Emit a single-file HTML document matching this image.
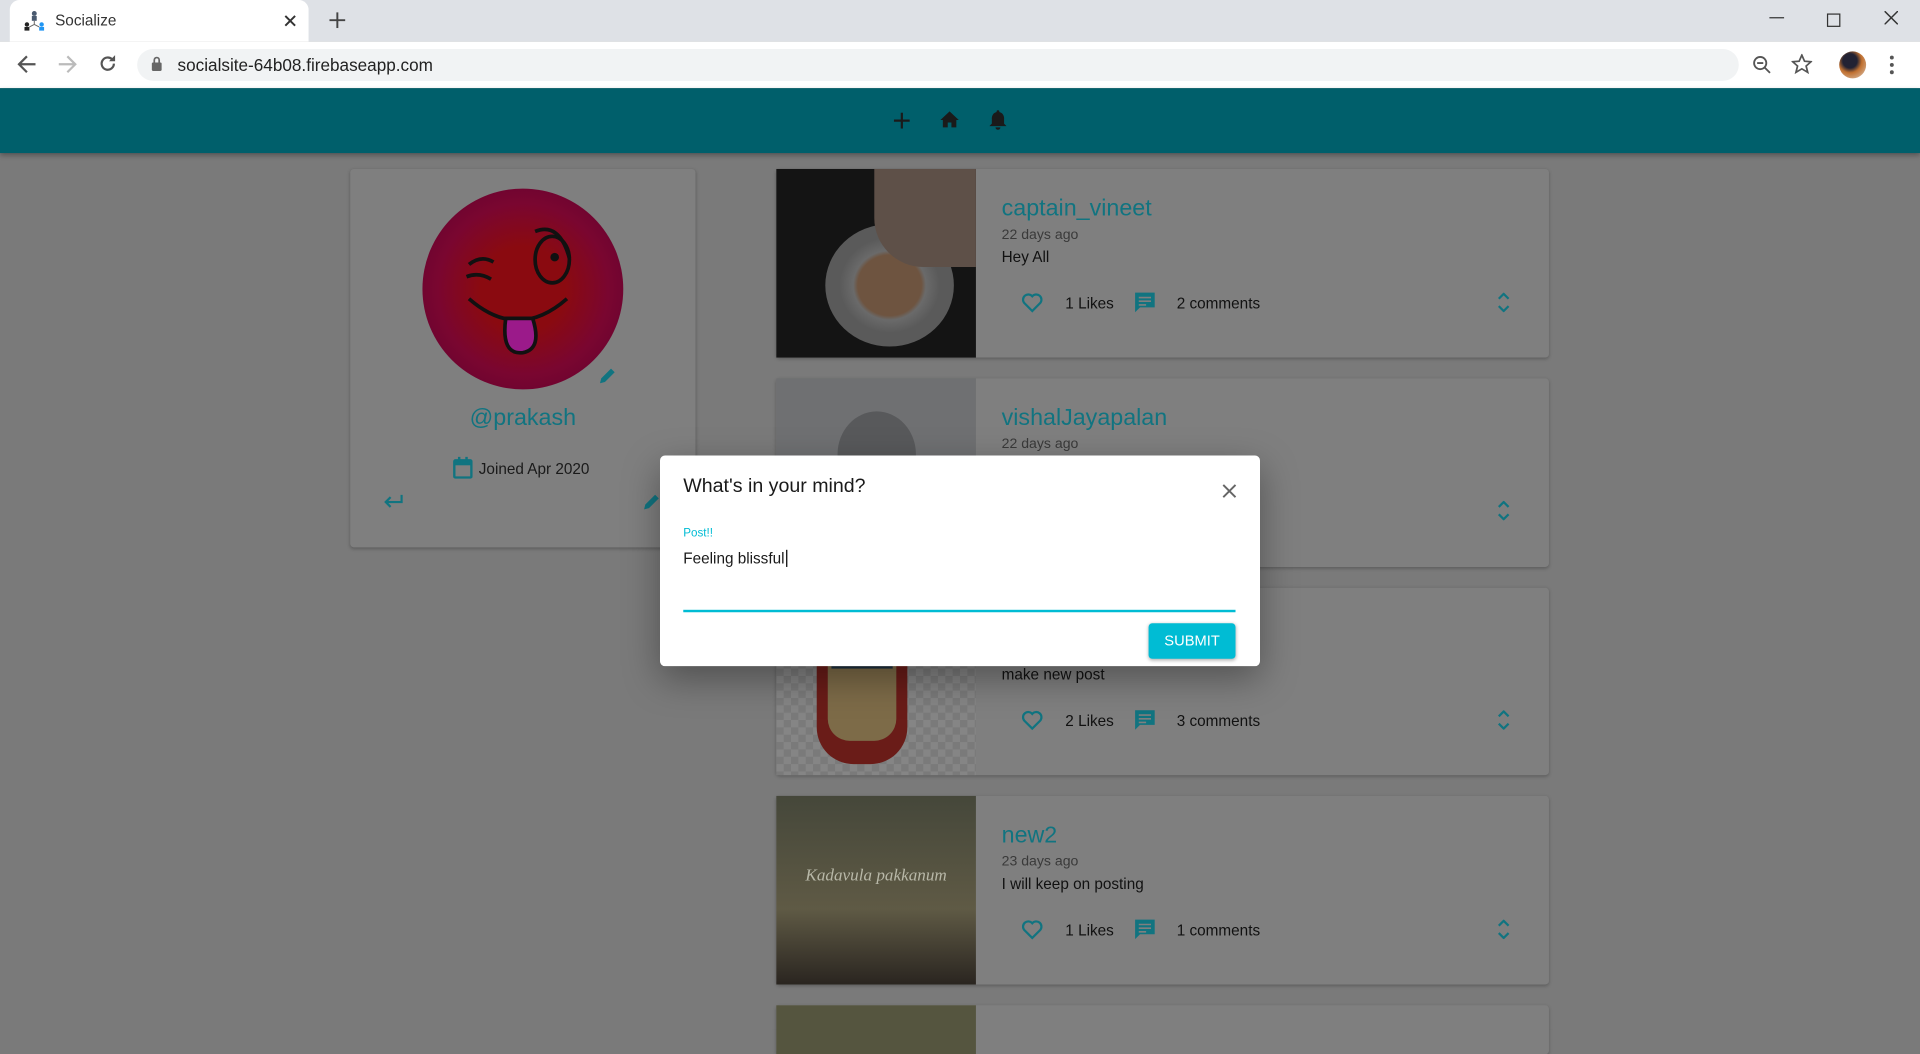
<!DOCTYPE html>
<html><head><meta charset="utf-8"><style>
html,body{margin:0;padding:0;width:1920px;height:1030px;overflow:hidden;background:#7a7a7a}
#w{position:absolute;left:0;top:0;width:1568px;height:841px;transform:scale(1.22449);transform-origin:0 0;font-family:"Liberation Sans",sans-serif;background:#7a7a7a}
.a{position:absolute}
.card{position:absolute;background:#7f7f7f;border-radius:3px;box-shadow:0 1px 3px rgba(0,0,0,.25)}
.teal{color:#117480}
.name{position:absolute;left:184px;font-size:19px;color:#117480}
.date{position:absolute;left:184px;font-size:11.5px;color:#3a3a3a}
.txt{position:absolute;left:184px;font-size:12.5px;color:#111}
.lbl{position:absolute;font-size:12.5px;color:#111}
</style></head><body><div id="w">
<div class="a" style="left:0;top:0;width:1568px;height:34px;background:#dee1e6"></div>
<div class="a" style="left:8px;top:0;width:244px;height:34px;background:#fff;border-radius:8px 8px 0 0"></div>
<svg class="a" style="left:19px;top:8px" width="18" height="18" viewBox="0 0 18 18"><circle cx="9" cy="3" r="2" fill="#4a5a70"/><rect x="7" y="5" width="4" height="4" fill="#4a5a70"/><circle cx="3" cy="12" r="1.8" fill="#222"/><rect x="1" y="14" width="4" height="3" fill="#222"/><circle cx="15" cy="12" r="1.8" fill="#2196f3"/><rect x="13" y="14" width="4" height="3" fill="#2196f3"/><path d="M9 9v3M9 12l-4 2M9 12l4 2" stroke="#666" stroke-width=".8" fill="none"/></svg>
<div class="a" style="left:45px;top:10px;font-size:12.5px;color:#333">Socialize</div>
<svg class="a" style="left:232px;top:12px" width="10" height="10"><path d="M1 1l8 8M9 1L1 9" stroke="#333" stroke-width="1.6"/></svg>
<svg class="a" style="left:269px;top:10px" width="13" height="13"><path d="M6.5 0v13M0 6.5h13" stroke="#444" stroke-width="1.6"/></svg>
<div class="a" style="left:1445px;top:14px;width:12px;height:1px;background:#333"></div>
<div class="a" style="left:1492px;top:11px;width:9px;height:9px;border:1px solid #333"></div>
<svg class="a" style="left:1539px;top:9px" width="11" height="11"><path d="M0 0l11 11M11 0L0 11" stroke="#333" stroke-width="1.2"/></svg>
<div class="a" style="left:0;top:34px;width:1568px;height:38px;background:#fff"></div>
<svg class="a" style="left:14px;top:45px" width="16" height="15"><path d="M15 7.5H2M8 1L1.5 7.5 8 14" stroke="#555" stroke-width="1.8" fill="none"/></svg>
<svg class="a" style="left:47px;top:45px" width="16" height="15"><path d="M1 7.5h13M8 1l6.5 6.5L8 14" stroke="#bbb" stroke-width="1.8" fill="none"/></svg>
<svg class="a" style="left:80px;top:44px" width="16" height="16"><path d="M13 8a5 5 0 1 1-1.5-3.6" stroke="#555" stroke-width="1.8" fill="none"/><path d="M14 1v5H9z" fill="#555"/></svg>
<div class="a" style="left:112px;top:40px;width:1308px;height:26px;background:#f1f3f4;border-radius:13px"></div>
<svg class="a" style="left:123px;top:46px" width="10" height="13"><rect x="1" y="5" width="8" height="7" rx="1" fill="#666"/><path d="M3 5V3a2 2 0 0 1 4 0v2" stroke="#666" stroke-width="1.4" fill="none"/></svg>
<div class="a" style="left:145px;top:45px;font-size:14px;color:#222">socialsite-64b08.firebaseapp.com</div>
<svg class="a" style="left:1431px;top:45px" width="16" height="16"><circle cx="6.5" cy="6.5" r="5" stroke="#555" stroke-width="1.5" fill="none"/><path d="M10 10l4.5 4.5M4 6.5h5" stroke="#555" stroke-width="1.5"/></svg>
<svg class="a" style="left:1463px;top:44px" width="17" height="17"><path d="M8.5 1l2.2 5 5.3.4-4 3.5 1.3 5.2-4.8-2.9-4.8 2.9 1.3-5.2-4-3.5 5.3-.4z" stroke="#555" stroke-width="1.4" fill="none"/></svg>
<div class="a" style="left:1502px;top:42px;width:22px;height:22px;border-radius:50%;background:radial-gradient(circle at 40% 35%,#223 0 30%,#c07030 50%,#dcb)"></div>
<svg class="a" style="left:1543px;top:45px" width="4" height="16"><circle cx="2" cy="2" r="1.6" fill="#555"/><circle cx="2" cy="8" r="1.6" fill="#555"/><circle cx="2" cy="14" r="1.6" fill="#555"/></svg>
<div class="a" style="left:0;top:72px;width:1568px;height:53px;background:#005f6b;box-shadow:0 2px 4px rgba(0,0,0,.3)"></div>
<svg class="a" style="left:730px;top:92px" width="13" height="13"><path d="M6.5 0v13M0 6.5h13" stroke="#1a1a1a" stroke-width="1.8"/></svg>
<svg class="a" style="left:767px;top:90px" width="17" height="15"><path d="M1 8L8.5 1 16 8h-2v6h-4v-4H7v4H3V8z" fill="#1a1a1a"/></svg>
<svg class="a" style="left:807px;top:89px" width="16" height="18"><path d="M8 1a1 1 0 0 1 1 1.5A5 5 0 0 1 13 8v4l2 2H1l2-2V8a5 5 0 0 1 4-5.5A1 1 0 0 1 8 1zM6 15h4a2 2 0 0 1-4 0z" fill="#1a1a1a"/></svg>
<div class="card" style="left:286px;top:138px;width:282px;height:309px">
<div class="a" style="left:59px;top:16px;width:164px;height:164px;border-radius:50%;background:radial-gradient(circle,#8a0a10 30%,#7a0630 60%,#5a0030)"></div>
<svg class="a" style="left:59px;top:16px" width="164" height="164" viewBox="0 0 164 164"><path d="M38 62q10-8 20-2M36 72q10-4 20 2" stroke="#111" stroke-width="3" fill="none"/><ellipse cx="106" cy="58" rx="14" ry="19" stroke="#111" stroke-width="3" fill="none"/><circle cx="108" cy="56" r="3.5" fill="#111"/><path d="M92 35q20-8 28 22" stroke="#111" stroke-width="3" fill="none"/><path d="M38 90q40 35 80 0" stroke="#111" stroke-width="3" fill="none"/><path d="M68 106q-4 30 14 28 16-3 8-28z" fill="#9b1a8a" stroke="#111" stroke-width="3"/></svg>
<svg class="a" style="left:202px;top:161px" width="16" height="16"><path d="M2 14l1-4 8-8 3 3-8 8z" fill="#117480"/></svg>
<div class="a teal" style="left:0;width:282px;top:193px;text-align:center;font-size:19px">@prakash</div>
<svg class="a" style="left:84px;top:235px" width="16" height="18"><rect x="1" y="3" width="14" height="14" rx="1" stroke="#117480" stroke-width="2" fill="none"/><rect x="1" y="3" width="14" height="4" fill="#117480"/><rect x="4" y="0" width="2" height="4" fill="#117480"/><rect x="10" y="0" width="2" height="4" fill="#117480"/></svg>
<div class="a" style="left:105px;top:238px;font-size:12.5px;color:#1a1a1a">Joined Apr 2020</div>
<svg class="a" style="left:27px;top:266px" width="16" height="12"><path d="M15 0v6H2M6 2L2 6l4 4" stroke="#117480" stroke-width="1.8" fill="none"/></svg>
<svg class="a" style="left:238px;top:264px" width="16" height="16"><path d="M2 14l1-4 8-8 3 3-8 8z" fill="#117480"/></svg>
</div>
<div class="card" style="left:634px;top:138px;width:631px;height:154px">
<div class="a" style="left:0;top:0;width:163px;height:154px;background:#141414;overflow:hidden"><div class="a" style="left:40px;top:45px;width:105px;height:100px;border-radius:50%;background:radial-gradient(ellipse,#6e5440 0 35%,#6a6a6a 40%,#5a5a5a 55%)"></div><div class="a" style="left:80px;top:0;width:90px;height:80px;background:#5e5048;border-radius:0 0 0 40px"></div></div>
<div class="name" style="top:22px">captain_vineet</div><div class="date" style="top:48px">22 days ago</div><div class="txt" style="top:65px">Hey All</div>
</div>
<div class="card" style="left:634px;top:309px;width:631px;height:154px">
<div class="a" style="left:0;top:0;width:163px;height:154px;background:#6f7072"></div>
<div class="a" style="left:50px;top:27px;width:64px;height:70px;border-radius:50%;background:#58595b"></div>
<div class="name" style="top:22px">vishalJayapalan</div><div class="date" style="top:48px">22 days ago</div>
</div>
<div class="card" style="left:634px;top:480px;width:631px;height:153px">
<div class="a" style="left:0;top:0;width:163px;height:153px;background:repeating-conic-gradient(#7a7a7a 0 25%,#858585 0 50%) 0 0/12px 12px"></div>
<div class="a" style="left:33px;top:50px;width:74px;height:94px;background:#6a1c18;border-radius:6px 6px 30px 30px"></div>
<div class="a" style="left:42px;top:55px;width:56px;height:70px;background:#7d6b48;border-radius:3px 3px 18px 18px"></div>
<div class="a" style="left:45px;top:64px;width:50px;height:6px;border-top:2px solid #1e3040"></div>
<div class="txt" style="top:64px">make new post</div>
</div>
<div class="card" style="left:634px;top:650px;width:631px;height:154px">
<div class="a" style="left:0;top:0;width:163px;height:154px;background:linear-gradient(#45473a,#5f5a45 60%,#2a2520)"></div>
<div class="a" style="left:0;width:163px;top:58px;text-align:center;font-size:14px;font-style:italic;color:#b8b8a8;font-family:'Liberation Serif',serif">Kadavula pakkanum</div>
<div class="name" style="top:22px">new2</div><div class="date" style="top:48px">23 days ago</div><div class="txt" style="top:65px">I will keep on posting</div>
</div>
<div class="card" style="left:634px;top:821px;width:631px;height:40px"><div class="a" style="left:0;top:0;width:163px;height:40px;background:#55553f"></div></div>
<svg width="0" height="0" style="position:absolute"><defs>
<g id="heart"><path d="M9 16L2.5 9.5A4 4 0 0 1 9 4a4 4 0 0 1 6.5 5.5z" stroke="#117480" stroke-width="1.8" fill="none"/></g>
<g id="cmt"><path d="M1 1h16v12H5l-4 4z" fill="#117480"/><path d="M4 5h10M4 8h10M4 11h6" stroke="#7f7f7f" stroke-width="1.3"/></g>
<g id="chev"><path d="M1 5l4-4 4 4M1 11l4 4 4-4" stroke="#117480" stroke-width="1.8" fill="none"/></g>
</defs></svg>
<div class="a" style="left:834px;top:238px"><svg width="18" height="18"><use href="#heart"/></svg></div><div class="lbl" style="left:870px;top:241px">1 Likes</div><div class="a" style="left:926px;top:238px"><svg width="18" height="18"><use href="#cmt"/></svg></div><div class="lbl" style="left:961px;top:241px">2 comments</div><div class="a" style="left:1223px;top:239px"><svg width="10" height="16"><use href="#chev"/></svg></div>
<div class="a" style="left:1223px;top:409px"><svg width="10" height="16"><use href="#chev"/></svg></div>
<div class="a" style="left:834px;top:579px"><svg width="18" height="18"><use href="#heart"/></svg></div><div class="lbl" style="left:870px;top:582px">2 Likes</div><div class="a" style="left:926px;top:579px"><svg width="18" height="18"><use href="#cmt"/></svg></div><div class="lbl" style="left:961px;top:582px">3 comments</div><div class="a" style="left:1223px;top:580px"><svg width="10" height="16"><use href="#chev"/></svg></div>
<div class="a" style="left:834px;top:750px"><svg width="18" height="18"><use href="#heart"/></svg></div><div class="lbl" style="left:870px;top:753px">1 Likes</div><div class="a" style="left:926px;top:750px"><svg width="18" height="18"><use href="#cmt"/></svg></div><div class="lbl" style="left:961px;top:753px">1 comments</div><div class="a" style="left:1223px;top:751px"><svg width="10" height="16"><use href="#chev"/></svg></div>
<div class="a" style="left:539px;top:372px;width:490px;height:172px;background:#fff;border-radius:4px;box-shadow:0 10px 30px rgba(0,0,0,.35)">
<div class="a" style="left:19px;top:17px;font-size:16px;color:#1a1a1a">What's in your mind?</div>
<svg class="a" style="left:459px;top:23px" width="12" height="12"><path d="M1 1l10 10M11 1L1 11" stroke="#666" stroke-width="1.6"/></svg>
<div class="a" style="left:19px;top:58px;font-size:9.5px;color:#00bcd4">Post!!</div>
<div class="a" style="left:19px;top:77px;font-size:12.5px;color:#1a1a1a">Feeling blissful<span style="border-left:1px solid #000;margin-left:1px"></span></div>
<div class="a" style="left:19px;top:126px;width:451px;height:2px;background:#00bcd4"></div>
<div class="a" style="left:399px;top:137px;width:71px;height:29px;background:#00bcd4;border-radius:3px;box-shadow:0 1px 3px rgba(0,0,0,.3);color:#fff;font-size:12px;text-align:center;line-height:29px">SUBMIT</div>
</div>
</div></body></html>
